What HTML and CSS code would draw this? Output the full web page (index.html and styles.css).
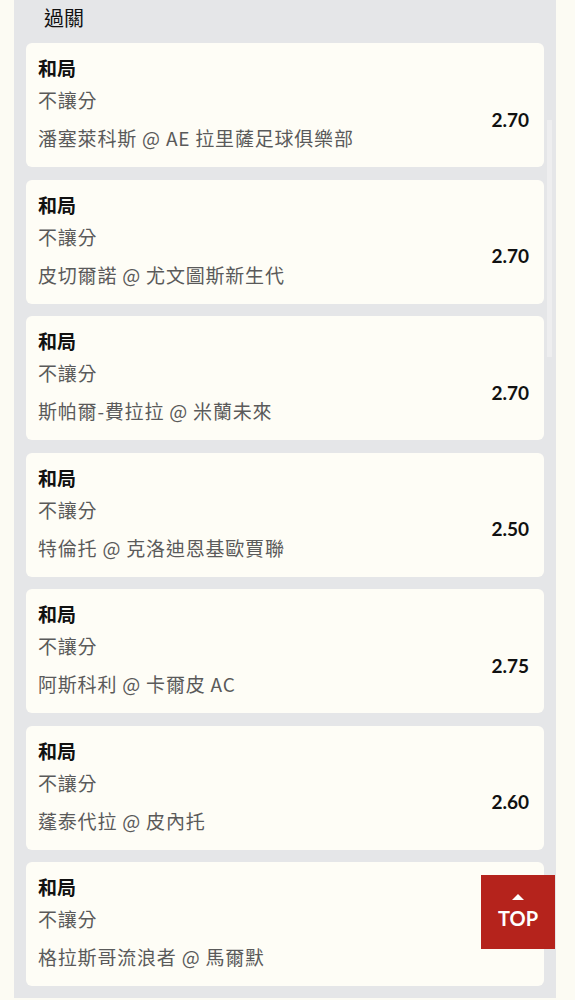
FILE: index.html
```html
<!DOCTYPE html>
<html lang="zh-Hant">
<head>
    <meta charset="UTF-8">
    <meta name="viewport" content="width=device-width, initial-scale=1.0">
    <title>過關</title>
    <link rel="stylesheet" href="styles.css">
</head>
<body>

    <div class="panel">
        <div class="panel-title">過關</div>

        <div class="bet-list">
            <div class="bet">
                <div class="bet-result">和局</div>
                <div class="bet-row">
                    <div class="bet-info">
                        <div class="bet-type">不讓分</div>
                        <div class="bet-match">潘塞萊科斯 @ AE 拉里薩足球俱樂部</div>
                    </div>
                    <div class="bet-odds">2.70</div>
                </div>
            </div>

            <div class="bet">
                <div class="bet-result">和局</div>
                <div class="bet-row">
                    <div class="bet-info">
                        <div class="bet-type">不讓分</div>
                        <div class="bet-match">皮切爾諾 @ 尤文圖斯新生代</div>
                    </div>
                    <div class="bet-odds">2.70</div>
                </div>
            </div>

            <div class="bet">
                <div class="bet-result">和局</div>
                <div class="bet-row">
                    <div class="bet-info">
                        <div class="bet-type">不讓分</div>
                        <div class="bet-match">斯帕爾-費拉拉 @ 米蘭未來</div>
                    </div>
                    <div class="bet-odds">2.70</div>
                </div>
            </div>

            <div class="bet">
                <div class="bet-result">和局</div>
                <div class="bet-row">
                    <div class="bet-info">
                        <div class="bet-type">不讓分</div>
                        <div class="bet-match">特倫托 @ 克洛迪恩基歐賈聯</div>
                    </div>
                    <div class="bet-odds">2.50</div>
                </div>
            </div>

            <div class="bet">
                <div class="bet-result">和局</div>
                <div class="bet-row">
                    <div class="bet-info">
                        <div class="bet-type">不讓分</div>
                        <div class="bet-match">阿斯科利 @ 卡爾皮 AC</div>
                    </div>
                    <div class="bet-odds">2.75</div>
                </div>
            </div>

            <div class="bet">
                <div class="bet-result">和局</div>
                <div class="bet-row">
                    <div class="bet-info">
                        <div class="bet-type">不讓分</div>
                        <div class="bet-match">蓬泰代拉 @ 皮內托</div>
                    </div>
                    <div class="bet-odds">2.60</div>
                </div>
            </div>

            <!-- odds of this one sit under the TOP button -->
            <div class="bet">
                <div class="bet-result">和局</div>
                <div class="bet-row">
                    <div class="bet-info">
                        <div class="bet-type">不讓分</div>
                        <div class="bet-match">格拉斯哥流浪者 @ 馬爾默</div>
                    </div>
                </div>
            </div>
        </div>

        <!-- scrollbar thumb of the list -->
        <div class="scroll-thumb"></div>
    </div>

    <a class="to-top" href="#">
        <span class="arrow"></span>
        <span>TOP</span>
    </a>

</body>
</html>
```

FILE: styles.css
```css
body {
    margin: 0;
    background-color: #fcfbf3;
    font-family: "Noto Sans CJK TC", "Noto Sans", sans-serif;
    color: #111;
    height: 1000px;
    overflow: hidden;
}

.panel {
    position: relative;
    margin: -10px 19px 0 14px;
    padding: 10px 12px 12px;
    background-color: #e5e6e8;
    border-radius: 10px 10px 0 0;
}

.panel-title {
    padding: 4px 18px 0;
    font-size: 20px;
    line-height: 28px;
    margin-bottom: 11px;
}

.bet-list {
    display: flex;
    flex-direction: column;
    gap: 12.5px;
}

.bet {
    background-color: #fefdf6;
    border-radius: 6px;
    padding: 13px 15px 17px 12px;
}

.bet-result {
    font-size: 19px;
    font-weight: bold;
    line-height: 24px;
}

.bet-row {
    display: flex;
    justify-content: space-between;
    align-items: center;
    margin-top: 8px;
}

.bet-type,
.bet-match {
    font-size: 19px;
    line-height: 24px;
    color: #5a5a5a;
    letter-spacing: 0.8px;
}

.bet-match {
    margin-top: 14px;
}

.bet-odds {
    font-family: Lato, "Noto Sans", sans-serif;
    font-size: 19px;
    font-weight: bold;
    color: #111;
}

.scroll-thumb {
    position: absolute;
    top: 130px;
    right: 4px;
    width: 5px;
    height: 237px;
    background-color: #eeeeef;
}

/* back to top button */
.to-top {
    position: fixed;
    top: 875px;
    left: 481px;
    width: 74px;
    height: 74px;
    background-color: #b5231c;
    color: #fff;
    text-decoration: none;
    display: flex;
    flex-direction: column;
    align-items: center;
    justify-content: center;
    font-family: Lato, "Noto Sans", sans-serif;
    font-size: 20px;
    font-weight: bold;
}

.to-top .arrow {
    width: 0;
    height: 0;
    border-left: 6px solid transparent;
    border-right: 6px solid transparent;
    border-bottom: 6px solid #fff;
    margin-bottom: 6px;
}
```
